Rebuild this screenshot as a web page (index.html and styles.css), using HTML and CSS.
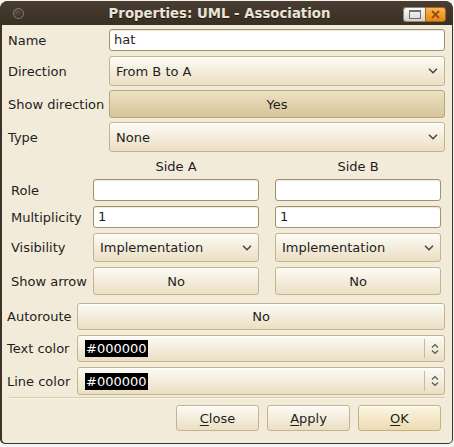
FILE: index.html
```html
<!DOCTYPE html>
<html>
<head>
<meta charset="utf-8">
<title>Properties: UML - Association</title>
<link rel="stylesheet" href="styles.css">
</head>
<body>
<div class="window">
  <div class="titlebar">
    <span class="menu-dot"></span>
    <span class="title">Properties: UML - Association</span>
    <div class="wm-buttons">
      <span class="wm wm-max"><svg width="12" height="9" viewBox="0 0 12 9"><rect x="0.5" y="0.5" width="11" height="8" fill="none" stroke="#6e6e6e"/><line x1="1" y1="1.5" x2="11" y2="1.5" stroke="#6e6e6e"/></svg></span>
      <span class="wm wm-close"><svg width="9" height="9" viewBox="0 0 9 9"><path d="M1 1 L8 8 M8 1 L1 8" stroke="#9b4b06" stroke-width="1.8"/></svg></span>
    </div>
  </div>
  <div class="body">
    <div class="grid g1">
      <span class="label">Name</span>
      <div class="entry r22">hat</div>
      <span class="label">Direction</span>
      <div class="combo r30">From B to A<svg class="chev" width="10" height="6" viewBox="0 0 10 6"><path d="M1 0.8 L5 4.8 L9 0.8" fill="none" stroke="#454545" stroke-width="1.5"/></svg></div>
      <span class="label">Show direction</span>
      <div class="btn pressed r28">Yes</div>
      <span class="label">Type</span>
      <div class="combo r30">None<svg class="chev" width="10" height="6" viewBox="0 0 10 6"><path d="M1 0.8 L5 4.8 L9 0.8" fill="none" stroke="#454545" stroke-width="1.5"/></svg></div>
    </div>

    <div class="grid g2">
      <span></span>
      <span class="side">Side A</span>
      <span class="side">Side B</span>

      <span class="label">Role</span>
      <div class="entry r22"></div>
      <div class="entry r22"></div>

      <span class="label">Multiplicity</span>
      <div class="entry r22">1</div>
      <div class="entry r22">1</div>

      <span class="label">Visibility</span>
      <div class="combo r29">Implementation<svg class="chev" width="10" height="6" viewBox="0 0 10 6"><path d="M1 0.8 L5 4.8 L9 0.8" fill="none" stroke="#454545" stroke-width="1.5"/></svg></div>
      <div class="combo r29">Implementation<svg class="chev" width="10" height="6" viewBox="0 0 10 6"><path d="M1 0.8 L5 4.8 L9 0.8" fill="none" stroke="#454545" stroke-width="1.5"/></svg></div>

      <span class="label">Show arrow</span>
      <div class="btn r28">No</div>
      <div class="btn r28">No</div>
    </div>

    <div class="grid g3">
      <span class="label">Autoroute</span>
      <div class="btn r27">No</div>
      <span class="label">Text color</span>
      <div class="combo color r27"><span class="sel">#000000</span><span class="spin"><svg width="8" height="12" viewBox="0 0 8 12"><path d="M1 4.5 L4 1.5 L7 4.5 M1 7.5 L4 10.5 L7 7.5" fill="none" stroke="#555" stroke-width="1.2"/></svg></span></div>
      <span class="label">Line color</span>
      <div class="combo color r28"><span class="sel">#000000</span><span class="spin"><svg width="8" height="12" viewBox="0 0 8 12"><path d="M1 4.5 L4 1.5 L7 4.5 M1 7.5 L4 10.5 L7 7.5" fill="none" stroke="#555" stroke-width="1.2"/></svg></span></div>
    </div>

    <div class="separator"></div>

    <div class="actions">
      <div class="btn act"><span><u>C</u>lose</span></div>
      <div class="btn act"><span><u>A</u>pply</span></div>
      <div class="btn act default"><span><u>O</u>K</span></div>
    </div>
  </div>
</div>
</body>
</html>
```

FILE: styles.css
```css
html, body {
  margin: 0;
  padding: 0;
}
body {
  background: #f4f4f2;
  width: 454px;
  height: 447px;
  overflow: hidden;
  font-family: "DejaVu Sans", "Noto Sans", sans-serif;
  font-size: 13px;
  color: #1e1e1e;
}
.window {
  margin-top: 1px;
  width: 453px;
  height: 443px;
  background: #3d3227;
  border-radius: 8px 8px 5px 5px;
  display: flex;
  flex-direction: column;
  box-sizing: border-box;
  padding: 0 1px 1px 2px;
}
.titlebar {
  height: 24px;
  flex: none;
  display: flex;
  align-items: center;
  background: linear-gradient(#4a3d31, #3a2f24);
  border-radius: 8px 8px 0 0;
  margin: 0 -1px 0 -2px;
}
.menu-dot {
  width: 9px;
  height: 9px;
  border-radius: 50%;
  margin-left: 13px;
  background: radial-gradient(circle at 40% 35%, #5b5249, #2d251d);
  border: 1px solid #8a8178;
  flex: none;
}
.title {
  flex: 1;
  text-align: center;
  padding-left: 12px;
  font-weight: bold;
  font-size: 13.3px;
  color: #e9e4da;
  text-shadow: 0 1px 0 #1d1710;
}
.wm-buttons {
  display: flex;
  margin-right: 7px;
  margin-top: 2px;
}
.wm {
  width: 21px;
  height: 15px;
  display: flex;
  align-items: center;
  justify-content: center;
  box-sizing: border-box;
}
.wm-max {
  width: 22px;
  background: linear-gradient(#fbfbfa, #d6d4d0);
  border: 1px solid #8d877e;
  border-right: none;
  border-radius: 3px 0 0 3px;
}
.wm-close {
  background: linear-gradient(#f9b65a, #e5870f);
  border: 1px solid #a3661e;
  border-radius: 0 3px 3px 0;
}
.body {
  flex: 1;
  background: #f3ebd9;
  border-radius: 0 0 4px 4px;
  display: flex;
  flex-direction: column;
}
.grid {
  display: grid;
  align-items: center;
}
.label {
  white-space: nowrap;
}
.g1 {
  grid-template-columns: 101px 336px;
  row-gap: 4px;
  padding: 4px 0 0 6px;
}
.g1 .entry { margin-bottom: 1px; }
.g2 {
  grid-template-columns: 66px 166px 166px;
  column-gap: 16px;
  padding: 7px 0 0 9px;
  row-gap: 5px;
}
.g3 {
  grid-template-columns: 70px 368px;
  row-gap: 5px;
  padding: 8px 0 0 5px;
}
.side {
  text-align: center;
  height: 16px;
  line-height: 16px;
  margin-bottom: -1px;
}
.r22 { height: 22px; }
.r27 { height: 27px; }
.r28 { height: 28px; }
.r29 { height: 29px; }
.r30 { height: 30px; }
.entry {
  box-sizing: border-box;
  background: #ffffff;
  border: 1px solid #a29367;
  border-radius: 3px;
  box-shadow: inset 0 1px 1px rgba(120, 100, 60, 0.15);
  padding: 0 4px;
  line-height: 20px;
}
.combo {
  box-sizing: border-box;
  position: relative;
  display: flex;
  align-items: center;
  padding: 0 6px;
  border: 1px solid #c4b48e;
  border-radius: 3px;
  background: linear-gradient(#fdfbf6, #ebdfc3);
  box-shadow: inset 0 1px 0 #ffffff;
}
.chev {
  position: absolute;
  right: 6px;
  top: 50%;
  margin-top: -3px;
}
.combo.color {
  padding-left: 7px;
}
.sel {
  background: #000000;
  color: #ffffff;
  padding: 0 1px;
  line-height: 17px;
}
.spin {
  position: absolute;
  right: 0;
  top: 3px;
  bottom: 3px;
  width: 19px;
  border-left: 1px solid #c9b994;
  display: flex;
  align-items: center;
  justify-content: center;
}
.btn {
  box-sizing: border-box;
  display: flex;
  align-items: center;
  justify-content: center;
  border: 1px solid #c4b48e;
  border-radius: 3px;
  background: linear-gradient(#fdfbf6, #ebdfc3);
  box-shadow: inset 0 1px 0 #ffffff;
}
.btn.pressed {
  background: linear-gradient(#ede1c3, #d6c49a);
  border-color: #b8a67d;
  box-shadow: none;
}
.separator {
  margin: 2px 7px 0 7px;
  height: 1px;
  background: #d9caa6;
  border-bottom: 1px solid #faf6ec;
}
.actions {
  display: flex;
  justify-content: flex-end;
  gap: 8px;
  padding: 6px 0 0 0;
  margin-right: 11px;
}
.btn.act {
  width: 83px;
  height: 26px;
}
.btn.default {
  background: linear-gradient(#fcf5e2, #ecdcb2);
  border-color: #c6b07d;
}
u {
  text-decoration: underline;
  text-underline-offset: 2px;
}
```
